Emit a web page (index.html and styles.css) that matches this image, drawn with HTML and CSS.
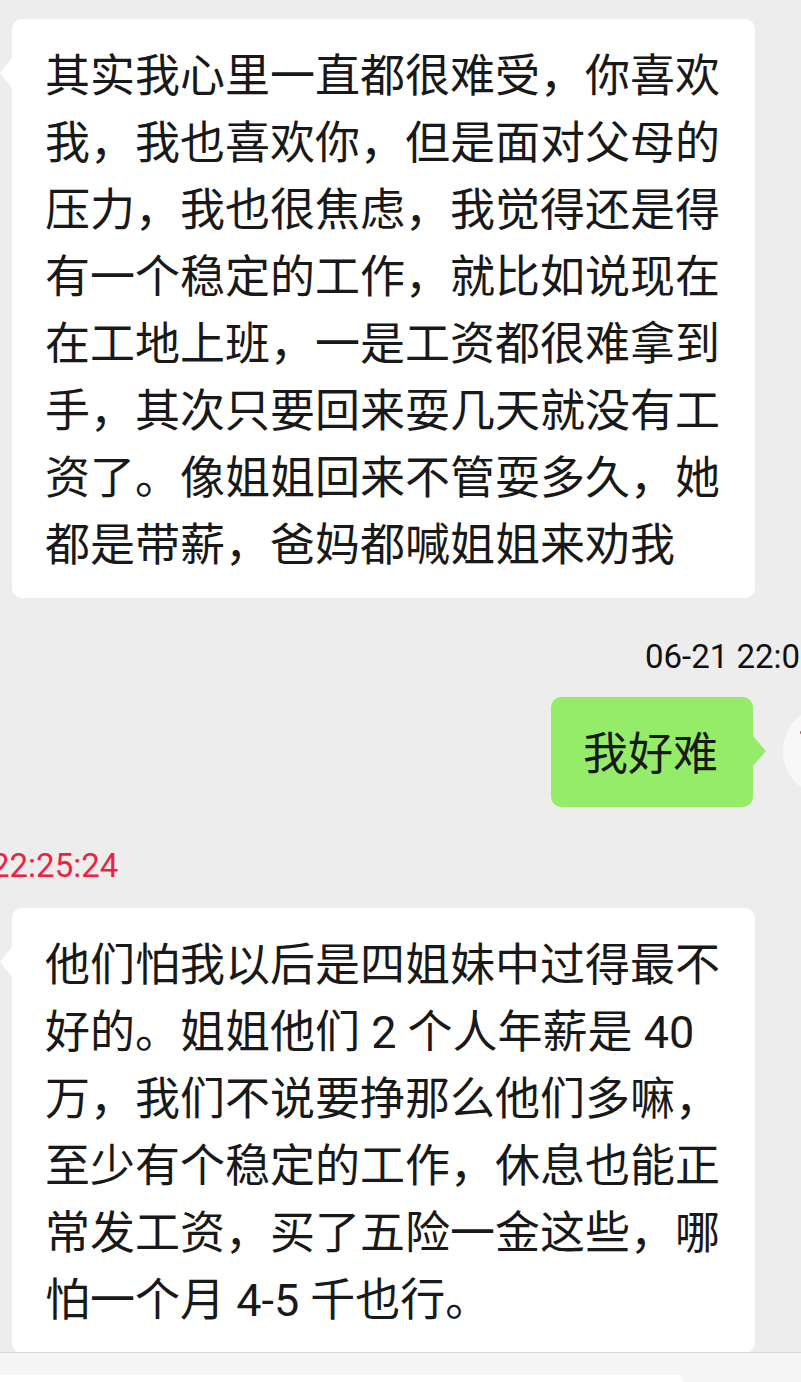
FILE: index.html
```html
<!DOCTYPE html>
<html lang="zh-CN">
<head>
<meta charset="utf-8">
<title>聊天</title>
<link rel="stylesheet" href="styles.css">
</head>
<body>
<div class="screen">
  <div class="chat">
    <div class="msg msg-in">
      <div class="bubble bubble-in">其实我心里一直都很难受，你喜欢我，我也喜欢你，但是面对父母的压力，我也很焦虑，我觉得还是得有一个稳定的工作，就比如说现在在工地上班，一是工资都很难拿到手，其次只要回来耍几天就没有工资了。像姐姐回来不管耍多久，她都是带薪，爸妈都喊姐姐来劝我</div>
    </div>
    <div class="time time-gray">06-21 22:05:10</div>
    <div class="msg msg-out">
      <div class="bubble bubble-out">我好难</div>
      <div class="avatar"><span class="avatar-mark"></span></div>
    </div>
    <div class="time time-red">22:25:24</div>
    <div class="msg msg-in">
      <div class="bubble bubble-in">他们怕我以后是四姐妹中过得最不好的。姐姐他们 2 个人年薪是 40 万，我们不说要挣那么他们多嘛，至少有个稳定的工作，休息也能正常发工资，买了五险一金这些，哪怕一个月 4-5 千也行。</div>
    </div>
  </div>
  <div class="footer">
    <div class="input"></div>
  </div>
</div>
</body>
</html>
```
FILE: styles.css
```css
html, body {
  margin: 0;
  padding: 0;
  background: #ededed;
  overflow: hidden;
}

.screen {
  width: 801px;
  height: 1382px;
  display: flex;
  flex-direction: column;
  overflow: hidden;
}

.chat {
  flex: none;
  height: 1352px;
  box-sizing: border-box;
  padding-top: 19px;
  display: flex;
  flex-direction: column;
  overflow: hidden;
}

.msg {
  display: flex;
}

.msg-in {
  padding-left: 12px;
}

.time + .msg-in {
  margin-top: 22px;
}

.bubble {
  position: relative;
  box-sizing: border-box;
  border-radius: 10px;
  padding: 24px 35px 19px 33px;
  font-family: Roboto, "Noto Sans CJK SC", sans-serif;
  font-size: 45px;
  line-height: 67px;
  color: #191919;
}

.bubble-in {
  background: #ffffff;
  max-width: 743px;
}

.bubble-in::before {
  content: "";
  position: absolute;
  left: -12px;
  top: 39px;
  border-top: 15px solid transparent;
  border-bottom: 15px solid transparent;
  border-right: 12px solid #ffffff;
}

.bubble-out {
  background: #95ec69;
  padding-left: 32px;
}

.bubble-out::after {
  content: "";
  position: absolute;
  right: -13px;
  top: 39px;
  border-top: 15px solid transparent;
  border-bottom: 15px solid transparent;
  border-left: 13px solid #95ec69;
}

.msg-out {
  justify-content: flex-end;
  align-items: flex-start;
  gap: 30px;
  margin-right: -72px;
  margin-top: 20px;
}

.avatar {
  position: relative;
  flex: none;
  width: 90px;
  height: 90px;
  margin-top: 9px;
  border-radius: 50%;
  background: #f8f8f8;
}

.avatar-mark {
  position: absolute;
  left: 17px;
  top: 25px;
  width: 4px;
  height: 3px;
  border-radius: 1px;
  background: #d9534f;
}

.time {
  font-family: Roboto, "Noto Sans CJK SC", sans-serif;
  font-size: 33px;
  line-height: 40px;
  white-space: nowrap;
}

.time-gray {
  margin-top: 39px;
  padding-left: 645px;
  color: #111111;
}

.time-red {
  margin-top: 39px;
  margin-left: -9px;
  color: #f0213f;
}

.footer {
  flex: none;
  height: 30px;
  box-sizing: border-box;
  border-top: 1px solid #d6d6d6;
  background: #f5f5f5;
  padding-top: 22px;
  display: flex;
}

.input {
  width: 694px;
  margin-left: -10px;
  height: 20px;
  background: #ffffff;
  border-radius: 8px 8px 0 0;
}
```
